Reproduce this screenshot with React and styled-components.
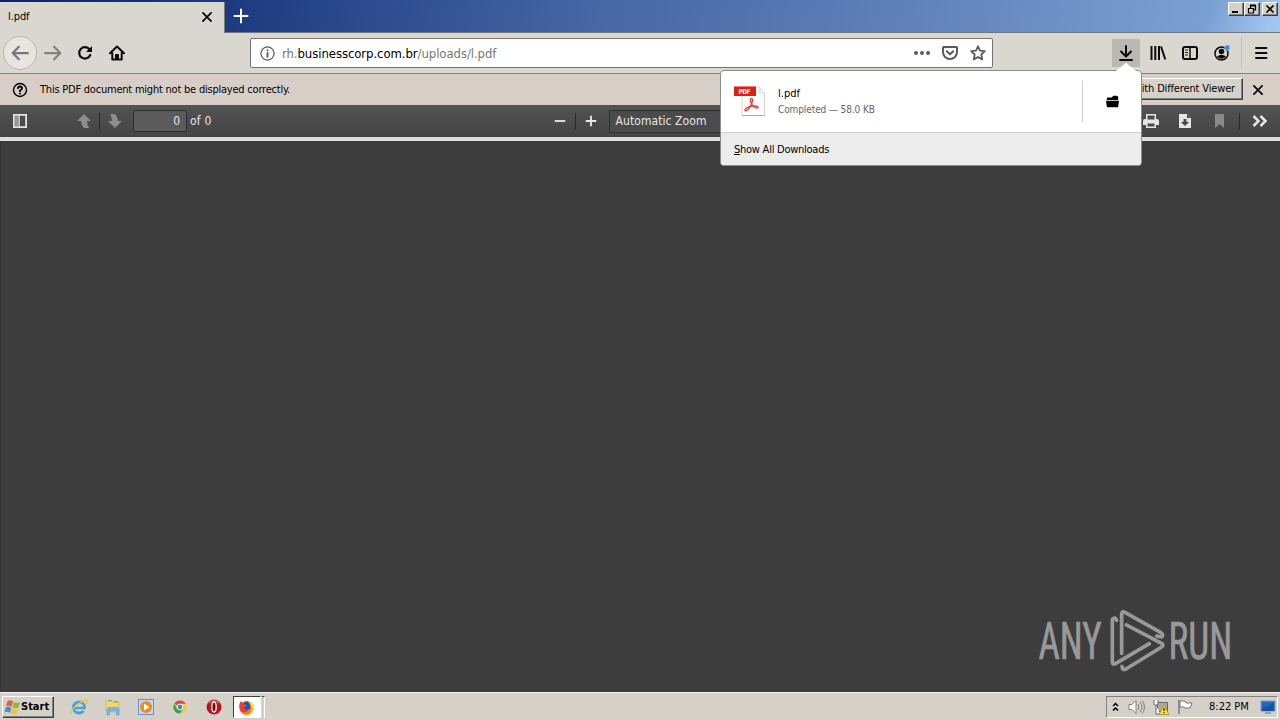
import styled, { createGlobalStyle, css } from "styled-components";

const GlobalStyle = createGlobalStyle`
  * {
    box-sizing: border-box;
  }

  body {
    margin: 0;
    overflow: hidden;
    font-family: "DejaVu Sans Condensed", "DejaVu Sans", Tahoma, sans-serif;
    font-stretch: condensed;
    font-size: 11px;
    color: #000;
  }

  svg {
    display: block;
    flex: none;
  }
`;

const raised = css`
  border: 1px solid;
  border-color: #fff #404040 #404040 #fff;
  box-shadow: inset -1px -1px 0 #808080;
  background: #d6d2ca;
`;

const Screen = styled.div`
  position: relative;
  display: flex;
  flex-direction: column;
  width: 1280px;
  height: 720px;
  background: #3d3d3d;
`;

const Label = styled.span`
  white-space: pre;
  font-size: ${(p) => p.$size || 11}px;
  letter-spacing: ${(p) => p.$track || 0}px;
  color: ${(p) => p.$color || "inherit"};
  line-height: 16px;
`;

// Title bar
const TitleBar = styled.header`
  display: flex;
  height: 33px;
  background:
    linear-gradient(115deg, transparent 94%, rgba(166, 202, 240, 0.85) 99%),
    linear-gradient(100deg, #0a246a 0%, #1d3a80 18%, #4767a5 47%, #5f80b9 70%, #82a7d9 100%);
`;

const Tab = styled.div`
  display: flex;
  align-items: center;
  justify-content: space-between;
  width: 225px;
  height: 31px;
  margin-top: 2px;
  padding: 0 11px 1px 8px;
  border-right: 1px solid #7c7c7c;
  background: #dad7d1;
`;

const NewTab = styled.div`
  flex: 1;
  padding: 8px 0 0 8px;
  border-bottom: 1px solid #75757d;
`;

const WindowButtons = styled.div`
  display: flex;
  width: 52px;
  padding-top: 2px;
  border-bottom: 1px solid #75757d;
`;

const WindowButton = styled.div`
  ${raised}
  display: flex;
  align-items: center;
  justify-content: center;
  width: 16px;
  height: 14px;
  margin-left: ${(p) => p.$gap || 0}px;
`;

// Navigation bar
const NavBar = styled.nav`
  display: flex;
  align-items: center;
  height: 41px;
  padding-left: 3px;
  border-bottom: 1px solid #85837f;
  background: #dad7d1;
`;

const NavButton = styled.div`
  display: flex;
  align-items: center;
  justify-content: center;
  width: 32px;
  height: 30px;
  color: ${(p) => p.$color || "#0c0c0d"};
`;

const BackButton = styled(NavButton)`
  width: 34px;
  height: 34px;
  border: 1px solid #bab7b1;
  border-radius: 50%;
  background: #e8e5e1;
`;

const DownloadButton = styled(NavButton)`
  width: 28px;
  height: 28px;
  margin: 0 2px 0 119px;
  background: #bbb8b3;
`;

const UrlBar = styled.div`
  display: flex;
  align-items: center;
  width: 743px;
  height: 30px;
  margin-left: 117px;
  padding: 0 6px 0 9px;
  border: 1px solid #75736f;
  border-radius: 2px;
  background: #fff;
  color: #5b5b5b;
`;

const Url = styled.div`
  flex: 1;
  padding: 1px 0 0 7px;
  color: #777;
  font-size: 13px;
  line-height: 18px;
  white-space: nowrap;
  letter-spacing: -0.07px;

  b {
    color: #000;
    font-weight: normal;
  }
`;

const UrlActions = styled.div`
  display: flex;
  gap: 12px;
`;

const NavDivider = styled.div`
  width: 1px;
  height: 32px;
  margin: 0 3px;
  background: #c5c2bc;
`;

// Notification bar
const Notice = styled.div`
  display: flex;
  align-items: center;
  height: 31px;
  padding: 0 16px 0 12px;
  background: #d7cfc7;
`;

const NoticeText = styled.div`
  flex: 1;
  padding-left: 12px;
`;

const ViewerButton = styled.div`
  ${raised}
  height: 22px;
  margin: 0 9px 2px 0;
  padding: 2px 7px 0;
`;

// PDF toolbar
const PdfBar = styled.div`
  display: flex;
  align-items: center;
  height: 32px;
  padding: 0 12px 0 13px;
  background: linear-gradient(#535353, #434343);
  color: #e6e6e6;
`;

const PdfDivider = styled.i`
  width: 1px;
  height: 17px;
  margin: 0 ${(p) => p.$right || 0}px 0 ${(p) => p.$left || 0}px;
  background: #292929;
`;

const PageField = styled.div`
  width: 54px;
  height: 22px;
  margin: 0 3px 0 10px;
  padding: 2px 6px 0 0;
  border: 1px solid #2d2d2d;
  border-radius: 2px;
  background: #5b5b5b;
  text-align: right;
`;

const ZoomControls = styled.div`
  display: flex;
  align-items: center;
  flex: 1;
  padding-left: 342px;
`;

const ZoomSelect = styled.div`
  width: 140px;
  height: 23px;
  margin-left: 12px;
  padding: 2px 0 0 6px;
  border: 1px solid #303030;
  background: #4b4b4b;
`;

const PdfActions = styled.div`
  display: flex;
  align-items: center;
`;

const Viewer = styled.main`
  display: flex;
  flex: 1;
  align-items: flex-end;
  justify-content: flex-end;
  padding: 0 41px 14px 0;
  border-top: 4px solid #dededd;
  background: #3d3d3d;
  box-shadow: inset 1px 0 0 #333;
`;

// Download panel
const Panel = styled.section`
  position: absolute;
  top: 70px;
  left: 720px;
  width: 422px;
  height: 96px;
  border: 1px solid #8c8c8c;
  border-radius: 4px;
  background: #fff;
`;

const PanelArrow = styled.svg`
  position: absolute;
  top: -9px;
  right: 4px;
`;

const DownloadRow = styled.div`
  display: flex;
  align-items: center;
  height: 61px;
  padding-left: 13px;
`;

const FileIconBox = styled.div`
  padding-bottom: 2px;
`;

const FileInfo = styled.div`
  display: flex;
  flex: 1;
  flex-direction: column;
  padding-left: 12px;
`;

const FolderButton = styled.div`
  display: flex;
  align-items: center;
  justify-content: center;
  width: 59px;
  height: 41px;
  padding-bottom: 1px;
  border-left: 1px solid #cfcfcf;
`;

const PanelFooter = styled.div`
  display: flex;
  align-items: center;
  height: 33px;
  padding: 1px 0 0 13px;
  border-top: 1px solid #d0d0d0;
  border-radius: 0 0 3px 3px;
  background: #ececec;
`;

// Taskbar
const Taskbar = styled.footer`
  display: flex;
  align-items: center;
  height: 28px;
  padding: 1px 2px 0;
  border-top: 1px solid #f5f3ef;
  background: #d5d1c9;
`;

const StartButton = styled.div`
  ${raised}
  display: flex;
  align-items: center;
  width: 52px;
  height: 22px;
  padding-left: 1px;
  font-weight: bold;
`;

const QuickLaunch = styled.div`
  display: flex;
  align-items: center;
  gap: 15.7px;
  padding-left: 16px;
`;

const QuickItem = styled.div`
  display: flex;
  align-items: center;
  justify-content: center;
  width: 18px;
`;

const ActiveTask = styled.div`
  display: flex;
  align-items: center;
  justify-content: center;
  width: 28px;
  height: 22px;
  margin-left: 10px;
  border: 1px solid;
  border-color: #404040 #fff #fff #404040;
  background: #fff;
`;

const TaskEdge = styled.div`
  width: 3px;
  height: 22px;
  margin-left: 1px;
  border-top: 1px solid #404040;
  border-right: 1px solid #fff;
`;

const Tray = styled.div`
  display: flex;
  align-items: center;
  width: 172px;
  height: 22px;
  margin-left: auto;
  padding-left: 5px;
  border: 1px solid;
  border-color: #808080 #fff #fff #808080;
`;

const Icon = ({ size = 16, w = 2, children, ...rest }) => (
  <svg
    width={size}
    height={size}
    viewBox="0 0 16 16"
    fill="none"
    stroke="currentColor"
    strokeWidth={w}
    strokeLinecap="round"
    strokeLinejoin="round"
    {...rest}
  >
    {children}
  </svg>
);

const CloseIcon = () => (
  <Icon size={12} w={2.2}>
    <path d="M2.5 2.5l11 11M13.5 2.5l-11 11" />
  </Icon>
);

const PdfFileIcon = () => (
  <svg width="32" height="32" viewBox="0 0 32 32">
    <path d="M8 2h17l5.500 6v22.500H8z" fill="#fff" stroke="#d5d5d5" />
    <path d="M25 2v6h5.500" fill="#eee" stroke="#ddd" />
    <path d="M8 30.500h22.500" stroke="#aaa" />
    <rect y="1.500" width="22" height="9.500" fill="#dc2013" />
    <text x="4.500" y="8.800" fontFamily="DejaVu Sans" fontWeight="bold" fontSize="6.500" fill="#fff" textLength="12">
      PDF
    </text>
    <path
      d="M17 13.500c2.500-.5 1.800 4-1 8.500-2.500 4-5.500 5-5 2.800.8-2.300 6-4 9.500-4 3.500 0 4.500 1.900 2.500 2.200-2.500.2-5.500-3.200-6.300-6-.6-2-.4-3.300.3-3.500z"
      fill="none"
      stroke="#df4437"
      strokeWidth="1.300"
    />
  </svg>
);

const AnyRunLogo = () => (
  <svg width="200" height="68" viewBox="0 0 200 68">
    <g fill="#999" stroke="#999" strokeWidth=".7" fontFamily="Roboto, sans-serif" fontSize="51">
      <text transform="translate(-.5 49.300) scale(.725 1)">ANY</text>
      <text transform="translate(129.500 49.300) scale(.73 1)">RUN</text>
    </g>
    <g
      transform="translate(-19 -10) scale(.3333)"
      fill="none"
      stroke="#999"
      strokeWidth="11"
      strokeLinecap="round"
      strokeLinejoin="round"
    >
      <path d="M305 160V43q0-11 10-6l108 61q9 6 2 13l-15-3" />
      <path d="M290 61q-4-12-13-3v128q1 10 11 4l100-59" />
      <path d="M319 75l106 55q8 5 0 11l-107 66q-12 5-12-8" />
    </g>
  </svg>
);

const StartFlag = () => (
  <svg width="17" height="16" viewBox="0 0 16 16">
    <path d="M3 2q3-1.500 5.500.500L7 8Q4.500 6 1.500 7.500z" fill="#e8602c" />
    <path d="M9.200 3q3 1.500 6.300.200L14 8.500q-3 1.500-6-.200z" fill="#8fb83a" />
    <path d="M1.200 8.500Q4 7 6.700 9L5.500 14Q3 12 0 13.500z" fill="#3c8de0" />
    <path d="M7.500 9.300q3 1.500 6 .200L12.300 14.500q-3 1.500-6.200-.2z" fill="#f5c32c" />
  </svg>
);

const ExplorerIcon = () => (
  <svg width="18" height="18" viewBox="0 0 18 18">
    <circle cx="9" cy="9.500" r="5.500" fill="none" stroke="#3fa4e0" strokeWidth="2.800" />
    <path d="M5 10h9.500" stroke="#3fa4e0" strokeWidth="2.200" />
    <path d="M13 11.300h4v1.700h-4z" fill="#d5d1c9" />
    <path d="M2 16q-3-2 4-8T17 2q1 1-1 4" fill="none" stroke="#e8c04a" strokeWidth="1.300" />
  </svg>
);

const LibrariesIcon = () => (
  <svg width="18" height="18" viewBox="0 0 18 18">
    <path d="M2 3h5l1 1.500h7V14H2z" fill="#efd67a" stroke="#d9b955" strokeWidth=".8" />
    <path d="M4 2.500h4M10 3.500h4" stroke="#66b35a" strokeWidth="1.200" />
    <path d="M3 17v-5.500q0-2 2-2h8q2 0 2 2V17h-2.500v-4h-7v4z" fill="#75b9e3" stroke="#5a9fd0" strokeWidth=".6" />
  </svg>
);

const PlayerIcon = () => (
  <svg width="18" height="18" viewBox="0 0 18 18">
    <rect x="1.500" y="1.500" width="15" height="15" fill="#c4daf0" stroke="#5f93c9" />
    <circle cx="9" cy="9" r="6" fill="#f28a1e" />
    <path d="M7 5.500v7l5.500-3.500z" fill="#fff" />
  </svg>
);

const ChromeIcon = () => (
  <svg width="14" height="14" viewBox="0 0 16 16">
    <circle cx="8" cy="8" r="7.500" fill="#f7c736" />
    <path d="M8 8L1.500 4.250A7.500 7.500 0 0 1 14.500 4.250H8z" fill="#dd4b3d" />
    <path d="M8 8L4.700 10.500 1.500 4.250A7.500 7.500 0 0 0 8 15.500l3.200-5.500z" fill="#34a156" />
    <circle cx="8" cy="8" r="3.600" fill="#fff" />
    <circle cx="8" cy="8" r="2.800" fill="#4285e8" />
  </svg>
);

const OperaIcon = () => (
  <svg width="16" height="16" viewBox="0 0 16 16">
    <circle cx="8" cy="8" r="7.500" fill="#b3191c" />
    <path d="M3 4a6.500 6.500 0 0 1 10 0" stroke="#dc6a62" strokeWidth="1.500" fill="none" />
    <ellipse cx="8" cy="8" rx="2.200" ry="5" fill="#7b0b0e" stroke="#fff" strokeWidth="1.300" />
  </svg>
);

const FirefoxIcon = () => (
  <svg width="17" height="17" viewBox="0 0 17 17">
    <circle cx="8.500" cy="9" r="7" fill="#ff7b24" />
    <path d="M9 1q7 2 7 8a7.400 7.400 0 0 1-6 7q5-4 3-8.500Q11 4 9 1z" fill="#ffd034" />
    <path d="M1.200 6Q2 3 3 2l2 2.500q2-.5 3 1L5.500 8q1 4 5 3.500Q9 14 5 13.500 1 12 1.200 6z" fill="#ee3b36" />
    <path d="M5.500 4Q7 2 9.500 2.500q3 2 3 5.500-.5 3-3.500 3-3.500-.3-3-3L8.500 6.500q-1-1.500-3-1.500z" fill="#2755b5" />
  </svg>
);

const launchers = [ExplorerIcon, LibrariesIcon, PlayerIcon, ChromeIcon, OperaIcon];

export default function App() {
  return (
    <Screen>
      <GlobalStyle />
      <TitleBar>
        <Tab>
          <Label $track={-0.1}>l.pdf</Label>
          <CloseIcon />
        </Tab>
        <NewTab>
          <Icon style={{ color: "#fff" }} w={2}>
            <path d="M8 1.500v13M1.500 8h13" />
          </Icon>
        </NewTab>
        <WindowButtons>
          <WindowButton>
            <svg width="10" height="10">
              <path d="M1 8h6" stroke="#000" strokeWidth="2" />
            </svg>
          </WindowButton>
          <WindowButton>
            <svg width="10" height="10" fill="none" stroke="#000" strokeWidth="1.200">
              <path d="M3 1h6M3 2h5.500v4H7M3.500 1v3M1 4.500h5.500M1.500 4v5h5V4" />
            </svg>
          </WindowButton>
          <WindowButton $gap={2}>
            <svg width="10" height="10" stroke="#000" strokeWidth="1.700">
              <path d="M1.500 1.500l7 7M8.500 1.500l-7 7" />
            </svg>
          </WindowButton>
        </WindowButtons>
      </TitleBar>

      <NavBar>
        <BackButton $color="#777">
          <Icon size={18}>
            <path d="M15 8H1.500M7 2.500L1.500 8 7 13.500" />
          </Icon>
        </BackButton>
        <NavButton $color="#85827e">
          <Icon size={18}>
            <path d="M1 8h13.500M9 2.500L14.500 8 9 13.500" />
          </Icon>
        </NavButton>
        <NavButton>
          <Icon w={2.200}>
            <path d="M13.200 10A5.700 5.700 0 1 1 12.500 4.500" />
            <path d="M15 1v6H9z" fill="currentColor" stroke="none" />
          </Icon>
        </NavButton>
        <NavButton>
          <Icon>
            <path d="M1 8.300L8 1.500l7 6.800M3.300 8v6.500h9.400V8" />
            <path d="M6.500 14V9.500h3V14" fill="currentColor" strokeWidth="1" />
          </Icon>
        </NavButton>
        <UrlBar>
          <Icon size={15} w={1.300}>
            <circle cx="8" cy="8" r="7" />
            <path d="M8 7.500v4M8 4.500v.2" strokeWidth="2" />
          </Icon>
          <Url>
            rh.<b>businesscorp.com.br</b>/uploads/l.pdf
          </Url>
          <UrlActions>
            <Icon stroke="none" fill="currentColor">
              <circle cx="2" cy="8" r="2" />
              <circle cx="8" cy="8" r="2" />
              <circle cx="14" cy="8" r="2" />
            </Icon>
            <Icon>
              <path d="M1.500 2h13q.5 0 .5.500V7a7 7 0 0 1-14 0V2.500q0-.5.500-.5zM4.800 6.200L8 9.300l3.200-3.100" />
            </Icon>
            <Icon w={1.800}>
              <path d="M8 1.300l2 4.400 4.800.5-3.500 3.300.9 4.900L8 12l-4.200 2.400.9-4.900L1.200 6.200 6 5.700z" />
            </Icon>
          </UrlActions>
        </UrlBar>
        <DownloadButton>
          <Icon>
            <path d="M8 1v9.500M3 6.500l5 5 5-5M2 15h12" />
          </Icon>
        </DownloadButton>
        <NavButton>
          <Icon strokeLinecap="butt">
            <path d="M1.500 1v14M5.300 1v14M9 1v14M11 1.500l4.300 13" />
          </Icon>
        </NavButton>
        <NavButton>
          <Icon>
            <rect x="1" y="2" width="14" height="12" rx="2" />
            <path d="M8 2v12" strokeWidth="1.500" />
            <path d="M3.500 5h2M3.500 7.500h2M3.500 10h2" strokeWidth="1" />
          </Icon>
        </NavButton>
        <NavButton>
          <Icon>
            <circle cx="7.500" cy="8.500" r="6.500" strokeWidth="1.500" />
            <circle cx="7.500" cy="6.500" r="2.800" fill="currentColor" stroke="none" />
            <path d="M3 11.500q4.500-3.500 9 0-4.500 4.500-9 0z" fill="currentColor" stroke="none" />
            <circle cx="13.300" cy="2.800" r="2.700" fill="#2f8fe5" stroke="#dad7d1" strokeWidth=".5" />
          </Icon>
        </NavButton>
        <NavDivider />
        <NavButton>
          <Icon>
            <path d="M3 3h10.500M3 8h10.500M3 13h10.500" />
          </Icon>
        </NavButton>
      </NavBar>

      <Notice>
        <Icon size={16} w={1.400}>
          <circle cx="8" cy="8" r="6.500" />
          <path d="M6 6.200Q6 4.500 8 4.500t2 1.800Q10 7.500 8 8.500v.7M8 11.500v.2" strokeWidth="1.800" />
        </Icon>
        <NoticeText>
          <Label $track={-0.22}>This PDF document might not be displayed correctly.</Label>
        </NoticeText>
        <ViewerButton>
          <Label $track={-0.15}>Open With Different Viewer</Label>
        </ViewerButton>
        <CloseIcon />
      </Notice>

      <PdfBar>
        <Icon size={14} strokeLinejoin="miter">
          <rect x="1" y="1" width="14" height="14" />
          <path d="M2 2h4v12H2z" fill="#999" stroke="none" />
          <path d="M7 2v12" strokeWidth="1.500" />
        </Icon>
        <Icon size={16} stroke="none" fill="#8d8d8d" style={{ marginLeft: 49 }}>
          <path d="M8 1l7 7h-4q0 4 2 7H8q-3-3-3-7H1z" />
        </Icon>
        <PdfDivider $left={7} $right={7} />
        <Icon size={16} stroke="none" fill="#8d8d8d">
          <path d="M8 15l7-7h-4q0-4-3-7H3q2 3 2 7H1z" />
        </Icon>
        <PageField>
          <Label $size={12}>0</Label>
        </PageField>
        <Label $size={12} $track={0.2}>of 0</Label>
        <ZoomControls>
          <Icon size={12} w={2.500} strokeLinecap="butt">
            <path d="M1 8h14" />
          </Icon>
          <PdfDivider $left={9} $right={9} />
          <Icon size={12} w={2.500} strokeLinecap="butt">
            <path d="M1 8h14M8 1v14" />
          </Icon>
          <ZoomSelect>
            <Label $size={12} $track={0.08}>Automatic Zoom</Label>
          </ZoomSelect>
        </ZoomControls>
        <PdfActions>
          <Icon stroke="none" fill="currentColor">
            <path d="M3 1h10v5h1q2 0 2 2v4h-3v3H3v-3H0V8q0-2 2-2h1z" />
            <path d="M4.500 2.500h7v4h-7zM4.500 10.500h7v3h-7z" fill="#4b4b4b" />
          </Icon>
          <Icon stroke="none" fill="currentColor" style={{ marginLeft: 18 }}>
            <path d="M2 1h8l4 4v10H2z" />
            <path d="M10 1v4h4M6.500 6h3v3h2.700L8 13 3.800 9h2.700z" fill="#4b4b4b" />
          </Icon>
          <Icon stroke="none" fill="#8a8a8a" style={{ marginLeft: 18 }}>
            <path d="M4 1h9v14l-4.500-4L4 15z" />
          </Icon>
          <PdfDivider $left={12} $right={12} />
          <Icon w={2.500} strokeLinecap="butt" strokeLinejoin="miter">
            <path d="M1.500 3l5 5-5 5M8.500 3l5 5-5 5" />
          </Icon>
        </PdfActions>
      </PdfBar>

      <Viewer>
        <AnyRunLogo />
      </Viewer>

      <Taskbar>
        <StartButton>
          <StartFlag />
          <Label $size={11}>Start</Label>
        </StartButton>
        <QuickLaunch>
          {launchers.map((Launcher, i) => (
            <QuickItem key={i}>
              <Launcher />
            </QuickItem>
          ))}
        </QuickLaunch>
        <ActiveTask>
          <FirefoxIcon />
        </ActiveTask>
        <TaskEdge />
        <Tray>
          <svg width="8" height="10" fill="none" stroke="#000" strokeWidth="1.500">
            <path d="M1 4l2.500-2.500L6 4M1 8.500L3.500 6 6 8.500" />
          </svg>
          <svg width="18" height="16" viewBox="0 0 18 16" fill="none" stroke="#808080" style={{ marginLeft: 8 }}>
            <path d="M1 5.500h3l4-4v13l-4-4H1z" fill="#fff" />
            <path d="M10 5q2 3 0 6M12 3q4 5 0 10M14 1.500q5 6.500 0 13" />
          </svg>
          <svg width="18" height="17" viewBox="0 0 18 17" style={{ marginLeft: 6 }}>
            <path d="M5.500 3.500h10v9h-10z" fill="#aaa" stroke="#666" />
            <path d="M2 1v4q0 1 1 1h2q1 0 1-1V1M4 6v9h4" fill="#fff" stroke="#666" />
            <path d="M12 6l5 9.500H7z" fill="#ffdf28" stroke="#a18a12" strokeWidth=".7" />
            <path d="M12 9v3M12 13v1.300" stroke="#222" strokeWidth="1.200" />
          </svg>
          <svg width="17" height="16" viewBox="0 0 17 16" style={{ marginLeft: 7 }}>
            <path d="M2 1v14" stroke="#777" strokeWidth="1.500" />
            <path d="M3 2h5l1 2h6l-2 5H8L7 8H3z" fill="#fff" stroke="#777" />
          </svg>
          <Label style={{ marginLeft: 15 }}>8:22 PM</Label>
          <svg width="16" height="15" viewBox="0 0 16 15" style={{ marginLeft: 11 }}>
            <path d="M1 1h14v10H1z" fill="#2868bd" stroke="#719bcb" />
            <path d="M2 8Q8 7 14 2v9H2z" fill="#1753a5" />
            <path d="M5 13h6" stroke="#8aa3bd" strokeWidth="2" />
          </svg>
        </Tray>
      </Taskbar>

      <Panel>
        <PanelArrow width="22" height="10">
          <path d="M0 9.500L1 9 11 .7 21 9v1H0z" fill="#fff" />
        </PanelArrow>
        <DownloadRow>
          <FileIconBox>
            <PdfFileIcon />
          </FileIconBox>
          <FileInfo>
            <Label>l.pdf</Label>
            <Label $size={10} $track={-0.1} $color="#666">Completed — 58.0 KB</Label>
          </FileInfo>
          <FolderButton>
            <Icon size={13} stroke="none" fill="#000">
              <path d="M1 6V4q0-1 1-1h5l2-2h4q2 0 2 2v3z" />
              <path d="M0 7h16l-1 7q0 1-1 1H2q-1 0-1-1z" />
            </Icon>
          </FolderButton>
        </DownloadRow>
        <PanelFooter>
          <Label $track={-0.25}>
            <u>S</u>how All Downloads
          </Label>
        </PanelFooter>
      </Panel>
    </Screen>
  );
}
